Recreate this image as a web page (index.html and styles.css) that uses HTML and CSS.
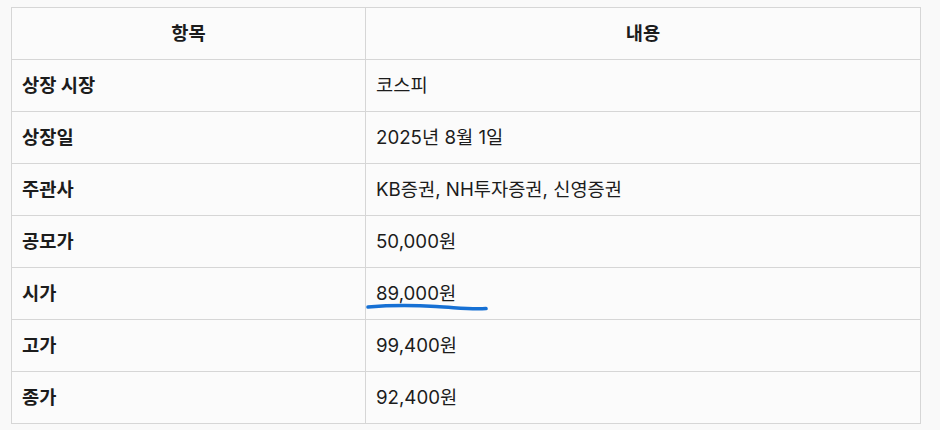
FILE: index.html
```html
<!DOCTYPE html>
<html lang="ko">
<head>
<meta charset="utf-8">
<link rel="stylesheet" href="styles.css">
</head>
<body>
<div class="wrap">
<table class="info">
  <thead>
    <tr><th class="col-key">항목</th><th>내용</th></tr>
  </thead>
  <tbody>
    <tr><td class="key">상장 시장</td><td>코스피</td></tr>
    <tr><td class="key">상장일</td><td>2025년 8월 1일</td></tr>
    <tr><td class="key">주관사</td><td>KB증권, NH투자증권, 신영증권</td></tr>
    <tr><td class="key">공모가</td><td>50,000원</td></tr>
    <tr><td class="key">시가</td><td><span class="marked">89,000원<svg class="scribble" width="124" height="12" viewBox="0 0 124 12"><path d="M2 5 C 20 3.5, 45 3, 70 4.5 S 105 7.5, 120 6.5" fill="none" stroke="#1670d4" stroke-width="3.6" stroke-linecap="round"/></svg></span></td></tr>
    <tr><td class="key">고가</td><td>99,400원</td></tr>
    <tr><td class="key">종가</td><td>92,400원</td></tr>
  </tbody>
</table>
</div>
</body>
</html>
```
FILE: styles.css
```css
html, body {
  margin: 0;
  padding: 0;
  background: #f9f9f9;
}
.wrap {
  padding: 7px 0 0 11px;
}
.info {
  border-collapse: collapse;
  width: 910px;
  background: #fbfbfb;
  font-family: Inter, "Noto Sans CJK KR", sans-serif;
  font-size: 18.7px;
  color: #1c1c1c;
}
.info th, .info td {
  border: 1px solid #d6d6d6;
  height: 52px;
  box-sizing: border-box;
  padding: 0 10px;
  line-height: 26px;
  text-align: left;
  vertical-align: middle;
}
.info th {
  text-align: center;
  font-weight: 700;
}
.info .col-key {
  width: 354px;
}
.info .key {
  font-weight: 700;
}
.marked {
  position: relative;
  display: inline-block;
}
.scribble {
  position: absolute;
  left: -10px;
  top: 21px;
}
```
